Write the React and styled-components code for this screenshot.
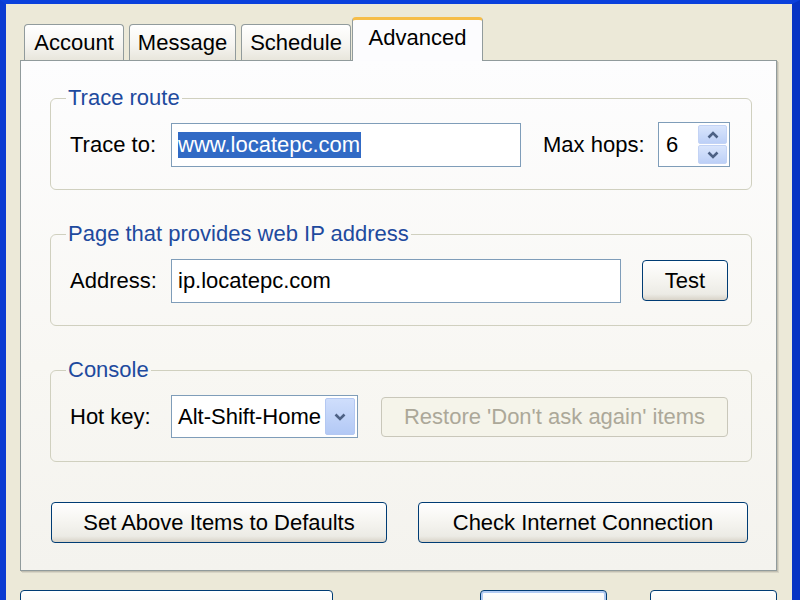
import React from 'react';
import styled, { createGlobalStyle, css } from 'styled-components';

const GlobalStyle = createGlobalStyle`
  html, body {
    margin: 0;
    padding: 0;
    overflow: hidden;
  }
  body {
    font-family: 'Liberation Sans', Arial, sans-serif;
  }
`;

const Window = styled.div`
  box-sizing: border-box;
  width: 800px;
  height: 600px;
  overflow: hidden;
  background: #ece9d8;
  border-top: 4px solid #0a40dc;
  border-left: 6px solid #0a3bd2;
  border-right: 8px solid #0634c4;
  padding: 13px 15px 0 14px;
  display: flex;
  flex-direction: column;
  font-size: 22px;
  color: #000;
`;

const TabRow = styled.div`
  display: flex;
  flex: none;
  align-items: flex-end;
  height: 43px;
  padding-left: 4px;
`;

const Tab = styled.div`
  box-sizing: border-box;
  width: ${(p) => p.$w}px;
  height: 36px;
  margin-left: ${(p) => p.$gap || 0}px;
  border: 1px solid #919b9c;
  border-bottom: none;
  border-radius: 4px 4px 0 0;
  background: linear-gradient(180deg, #ffffff 0%, #f6f5f1 55%, #e8e6dc 100%);
  display: flex;
  align-items: center;
  justify-content: center;

  ${(p) =>
    p.$active &&
    css`
      height: 44px;
      margin-bottom: -1px;
      position: relative;
      z-index: 1;
      background: #fcfcfe;
      border-top: 3px solid #f6bd48;
      padding-bottom: 6px;
    `}
`;

const Panel = styled.div`
  box-sizing: border-box;
  flex: none;
  height: 511px;
  border: 1px solid #919b9c;
  background: linear-gradient(180deg, #fdfdfe 0%, #f8f7f3 60%, #f4f3ee 100%);
  box-shadow: 1px 1px 0 #c2bfb1, 2px 2px 0 #d8d5c7;
  padding: 24px 24px 0 29px;
  display: flex;
  flex-direction: column;
  gap: 31px;
`;

const GroupBox = styled.fieldset`
  margin: 0;
  padding: 11px 21px 22px 19px;
  border: 1px solid #d0d0bf;
  border-radius: 6px;
  min-width: 0;
`;

const Legend = styled.legend`
  padding: 0 2px;
  margin-left: -4px;
  line-height: 26px;
  color: #1e4a9e;
`;

const Row = styled.div`
  display: flex;
  align-items: center;
  height: 45px;
`;

const Label = styled.span`
  width: ${(p) => (p.$w ? `${p.$w}px` : 'auto')};
  margin-left: ${(p) => p.$ml || 0}px;
  white-space: nowrap;
  flex: none;
`;

const TextBox = styled.div`
  box-sizing: border-box;
  width: ${(p) => p.$w}px;
  height: ${(p) => p.$h || 44}px;
  margin-left: ${(p) => p.$ml || 0}px;
  border: 1px solid #7f9db9;
  background: #fff;
  display: flex;
  align-items: center;
  padding-left: 6px;
  white-space: nowrap;
  flex: none;
`;

const Selected = styled.span`
  background: #316ac5;
  color: #fff;
  line-height: 26px;
  padding-right: 1px;
`;

const SpinValue = styled.span`
  padding-left: 1px;
`;

const SpinButtons = styled.div`
  margin-left: auto;
  margin-right: 2px;
  display: flex;
  flex-direction: column;
  gap: 1px;
`;

const SpinButton = styled.div`
  box-sizing: border-box;
  width: 29px;
  height: 19px;
  border: 1px solid #c3d3f5;
  border-radius: 2px;
  background: linear-gradient(180deg, #d9e5fc 0%, #bdd0f7 100%);
  display: flex;
  align-items: center;
  justify-content: center;
`;

const DropButton = styled.div`
  box-sizing: border-box;
  width: 30px;
  height: 37px;
  margin-left: auto;
  margin-right: 2px;
  border: 1px solid #b4c8f2;
  border-radius: 2px;
  background: linear-gradient(180deg, #cfdefc 0%, #b3c9f5 100%);
  display: flex;
  align-items: center;
  justify-content: center;
`;

const Button = styled.button`
  box-sizing: border-box;
  width: ${(p) => p.$w}px;
  height: ${(p) => p.$h || 41}px;
  margin-left: ${(p) => (p.$ml === 'auto' ? 'auto' : `${p.$ml || 0}px`)};
  padding: 0;
  border: 1px solid #003c74;
  border-radius: 4px;
  background: linear-gradient(180deg, #ffffff 0%, #f6f5f1 45%, #ecebe5 85%, #d8d3c8 100%);
  font: 22px 'Liberation Sans', Arial, sans-serif;
  color: #000;
  white-space: nowrap;
  flex: none;

  &:disabled {
    border-color: #c9c7ba;
    background: #f5f4ea;
    color: #aca899;
  }

  ${(p) =>
    p.$default &&
    css`
      box-shadow: inset 0 0 0 2px #b2cbf3;
    `}
`;

const ButtonRow = styled.div`
  display: flex;
  margin-top: 9px;
  padding-left: 1px;
  gap: 31px;
`;

const BottomRow = styled.div`
  display: flex;
  flex: none;
  margin-top: 19px;
  gap: 43px;
`;

const Chevron = ({ up }) => (
  <svg width="12" height="8" viewBox="0 0 12 8">
    <path
      d={up ? 'M1.5 6.5 L6 2 L10.5 6.5' : 'M1.5 1.5 L6 6 L10.5 1.5'}
      fill="none"
      stroke="#4d6185"
      strokeWidth="2.6"
    />
  </svg>
);

const App = () => {
  return (
    <>
      <GlobalStyle />
      <Window>
        <TabRow>
          <Tab $w={100}>Account</Tab>
          <Tab $w={107} $gap={5}>Message</Tab>
          <Tab $w={110} $gap={5}>Schedule</Tab>
          <Tab $w={131} $gap={1} $active>Advanced</Tab>
        </TabRow>

        <Panel>
          <GroupBox>
            <Legend>Trace route</Legend>
            <Row>
              <Label $w={101}>Trace to:</Label>
              <TextBox $w={350}>
                <Selected>www.locatepc.com</Selected>
              </TextBox>
              <Label $w={98} $ml={22}>Max hops:</Label>
              <TextBox $w={72} $h={45} $ml={17}>
                <SpinValue>6</SpinValue>
                <SpinButtons>
                  <SpinButton>
                    <Chevron up />
                  </SpinButton>
                  <SpinButton>
                    <Chevron />
                  </SpinButton>
                </SpinButtons>
              </TextBox>
            </Row>
          </GroupBox>

          <GroupBox>
            <Legend>Page that provides web IP address</Legend>
            <Row>
              <Label $w={101}>Address:</Label>
              <TextBox $w={450}>ip.locatepc.com</TextBox>
              <Button $w={86} $ml={21}>Test</Button>
            </Row>
          </GroupBox>

          <GroupBox>
            <Legend>Console</Legend>
            <Row>
              <Label $w={101}>Hot key:</Label>
              <TextBox $w={187} $h={43}>
                Alt-Shift-Home
                <DropButton>
                  <Chevron />
                </DropButton>
              </TextBox>
              <Button $w={347} $h={40} $ml={23} disabled>
                Restore 'Don't ask again' items
              </Button>
            </Row>
          </GroupBox>

          <ButtonRow>
            <Button $w={336}>Set Above Items to Defaults</Button>
            <Button $w={330}>Check Internet Connection</Button>
          </ButtonRow>
        </Panel>

        <BottomRow>
          <Button $w={313} $h={40}> </Button>
          <Button $w={127} $h={40} $ml="auto" $default> </Button>
          <Button $w={127} $h={40}> </Button>
        </BottomRow>
      </Window>
    </>
  );
};

export default App;
